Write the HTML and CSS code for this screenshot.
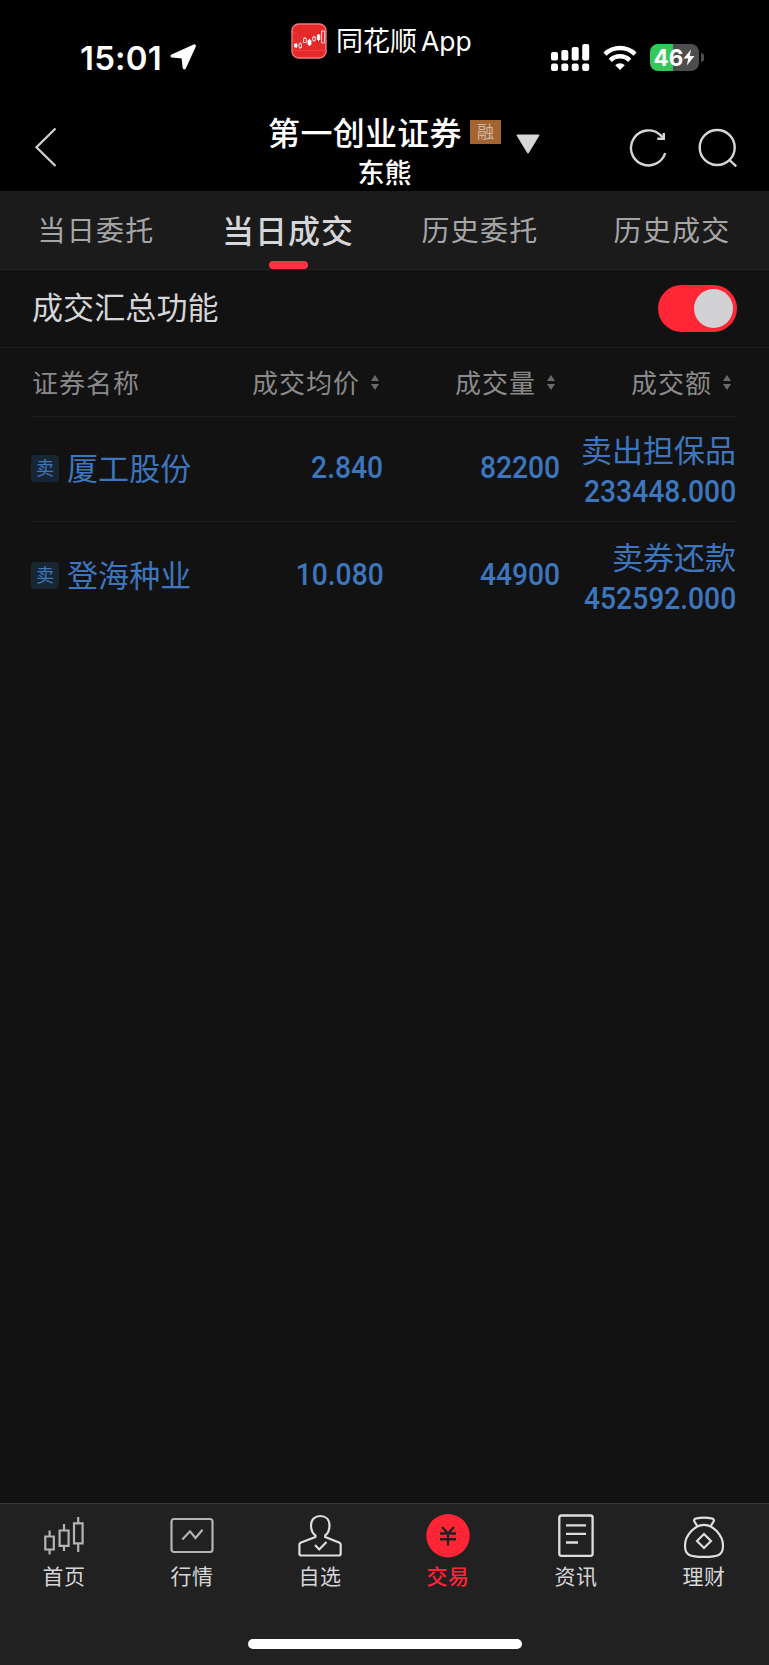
FILE: index.html
```html
<!DOCTYPE html>
<html lang="zh-CN">
<head>
    <meta charset="UTF-8">
    <meta name="viewport" content="width=device-width, initial-scale=1.0">
    <title>当日成交</title>
    <link rel="stylesheet" href="styles.css">
</head>
<body>
    <header class="top">
        <div class="status-bar">
            <div class="status-left">
                <span class="time">15:01</span>
                <svg class="location" width="26" height="26" viewBox="0 0 26 26"><path d="M24 1.2 1.9 11.2Q.6 12 1.9 12.8L12.4 13.7 13.4 23.8Q14.2 25.6 15.2 23.8L25 2.4Q25.3.7 24 1.2Z" fill="#fff" stroke="#fff" stroke-width="1.600" stroke-linejoin="round"/></svg>
            </div>
            <div class="status-app">
                <svg width="36" height="36" viewBox="0 0 36 36">
                    <rect x="1" y="1" width="34" height="34" rx="6.5" fill="#e62a2c" stroke="#f07a7a" stroke-width="1.4"/>
                    <path d="M2 27.500H34M2 10H5" stroke="#ee4a4a" stroke-width=".7"/>
                    <g fill="#fff" stroke="#fff">
                        <path d="M5.200 20v5M18.500 16v7M27.500 11v7" stroke-width="1"/>
                        <path d="M3.500 21h2.500v3H3.500zM17 17.200h3v4.500h-3zM26.300 12h2.500v4.500h-2.500z" stroke-width=".8"/>
                        <path d="M8 20.800h2.500v3.600H8zM12.500 15.500h2.800v4h-2.800zM21.700 14h2.500v3.400h-2.500zM30.600 8h3v12h-3zM9.200 19v1.500M9.200 24.500v1.500M14 14v1.500M23 12.700V14M23 17.500v1.300" fill="none" stroke-width=".8"/>
                    </g>
                </svg>
                <span class="app-name">同花顺<span class="app-latin">App</span></span>
            </div>
            <div class="status-right">
                <svg width="39" height="28" viewBox="0 0 39 28" fill="#fff">
                    <rect x="0" y="8" width="7" height="8.500" rx="2"/>
                    <rect x="10.300" y="6" width="7" height="10.500" rx="2"/>
                    <rect x="20.700" y="3" width="7" height="13.500" rx="2"/>
                    <rect x="31.200" y="0" width="7" height="16.500" rx="2"/>
                    <rect x="0" y="19.500" width="7" height="7.500" rx="2.200"/>
                    <rect x="10.300" y="19.500" width="7" height="7.500" rx="2.200"/>
                    <rect x="20.700" y="19.500" width="7" height="7.500" rx="2.200"/>
                    <rect x="31.200" y="19.500" width="7" height="7.500" rx="2.200"/>
                </svg>
                <svg class="wifi" width="34" height="26" viewBox="0 0 34 26" fill="none" stroke="#fff" stroke-width="4.500">
                    <path d="M2 9.200A21.500 21.500 0 0 1 32 9.200"/>
                    <path d="M7.300 15.300A13.800 13.800 0 0 1 26.700 15.300"/>
                    <path d="M17 25 12.200 20.300A6.800 6.800 0 0 1 21.800 20.300Z" fill="#fff" stroke="none"/>
                </svg>
                <div class="battery">
                    <span class="battery-level">46</span>
                    <svg width="12" height="17" viewBox="0 0 12 17"><path d="M8 .5.5 9.500H5.200L3.800 16.500 11.500 7H6.800Z" fill="#fff"/></svg>
                </div>
            </div>
        </div>
        <div class="title-bar">
            <svg class="back" width="24" height="40" viewBox="0 0 24 40"><path d="M21.500 1.500 2.500 20.200 21.500 39" fill="none" stroke="#d0d0d0" stroke-width="2.300"/></svg>
            <div class="title">
                <div class="broker">
                    <span class="broker-name">第一创业证券</span>
                    <span class="badge">融</span>
                    <svg class="dropdown" width="24" height="20" viewBox="0 0 24 20"><path d="M1.500 1.300H22.500L12 18.500Z" fill="#d6d6d8" stroke="#d6d6d8" stroke-width="1.800" stroke-linejoin="round"/></svg>
                </div>
                <div class="account">东熊</div>
            </div>
            <div class="actions">
                <svg width="39" height="40" viewBox="0 0 39 40" fill="none" stroke="#d6d6d8" stroke-width="2.400">
                    <path d="M36.200 25A17.500 17.500 0 1 1 31.500 7.200L35 10.600"/>
                    <path d="M34.800 5V10.700H28.300"/>
                </svg>
                <svg width="40" height="40" viewBox="0 0 40 40" fill="none" stroke="#d6d6d8" stroke-width="2.400">
                    <circle cx="19.200" cy="19.500" r="17.500"/>
                    <path d="M31.500 32 38.200 38.400"/>
                </svg>
            </div>
        </div>
    </header>

    <nav class="tabs">
        <a class="tab">当日委托</a>
        <a class="tab active">当日成交</a>
        <a class="tab">历史委托</a>
        <a class="tab">历史成交</a>
    </nav>

    <main class="content">
        <div class="summary">
            <span class="summary-label">成交汇总功能</span>
            <span class="switch"></span>
        </div>

        <div class="table">
            <div class="row head">
                <span>证券名称</span>
                <span class="num">成交均价<i class="sort"></i></span>
                <span class="num">成交量<i class="sort"></i></span>
                <span class="num">成交额<i class="sort"></i></span>
            </div>
            <div class="row">
                <div class="stock"><span class="side">卖</span><span class="name">厦工股份</span></div>
                <div class="num"><span class="digits">2.840</span></div>
                <div class="num"><span class="digits">82200</span></div>
                <div class="amount"><span>卖出担保品</span><span class="digits">233448.000</span></div>
            </div>
            <div class="row last">
                <div class="stock"><span class="side">卖</span><span class="name">登海种业</span></div>
                <div class="num"><span class="digits">10.080</span></div>
                <div class="num"><span class="digits">44900</span></div>
                <div class="amount"><span>卖券还款</span><span class="digits">452592.000</span></div>
            </div>
        </div>
    </main>

    <footer class="bottom">
        <nav class="menu">
            <a class="item">
                <svg width="44" height="44" viewBox="0 0 44 44" fill="none" stroke="#b4b4b4" stroke-width="2.200">
                    <path d="M3.300 22.500h8.500v13H3.300zM17.600 16.500h9v15.300h-9zM32 9.300h8.600v20H32zM7.600 16.500v6M7.600 35.500v5M22 10v6.500M22 32v5M36.200 3v6.300M36.200 29.500v8.500"/>
                </svg>
                <span>首页</span>
            </a>
            <a class="item">
                <svg width="44" height="44" viewBox="0 0 44 44" fill="none" stroke="#b4b4b4" stroke-width="2.200">
                    <rect x="1.500" y="5" width="41" height="33" rx="2.500"/>
                    <path d="M12.300 25.500 20 17.300 25.500 24 32.500 15.800"/>
                </svg>
                <span>行情</span>
            </a>
            <a class="item">
                <svg width="44" height="44" viewBox="0 0 44 44" fill="none" stroke="#dedede" stroke-width="2.200">
                    <path d="M17.400 23V21.500C14 19 13 16 13 11.500 13 5.500 17 2 22.300 2S31.500 5.500 31.500 11.500C31.500 16 30.500 19 27.200 21.500V23L41.600 28.800Q42.700 29.400 42.700 31V39.500Q42.700 41.500 40.700 41.500H3.400Q1.400 41.500 1.400 39.500V31Q1.400 29.400 2.500 28.800L17.400 23Z"/>
                    <path d="M17 31 21.200 35.500 28.500 28"/>
                </svg>
                <span>自选</span>
            </a>
            <a class="item active">
                <svg width="44" height="44" viewBox="0 0 44 44">
                    <circle cx="22" cy="21.700" r="21.700" fill="#ff2436"/>
                    <path d="M16 13 22 19.500 28 13M14 19.500H30M14 25.300H30M22 19.500V31.500" fill="none" stroke="#212121" stroke-width="2.400"/>
                </svg>
                <span>交易</span>
            </a>
            <a class="item">
                <svg width="44" height="44" viewBox="0 0 44 44" fill="none" stroke="#dedede" stroke-width="2.300">
                    <rect x="5.300" y="1.500" width="33.300" height="40.300" rx="2"/>
                    <path d="M12 11.300H32M12 19.900H32M12 28.500H24"/>
                </svg>
                <span>资讯</span>
            </a>
            <a class="item">
                <svg width="44" height="44" viewBox="0 0 44 44" fill="none" stroke="#dedede" stroke-width="2.200">
                    <path d="M15.500 12.300 12.300 7.300Q11.500 4.800 14.500 4.300 22 2.800 29.500 4.300 32.500 4.800 31.700 7.300L28.500 12.300"/>
                    <path d="M22 10.800C31 10.800 41 21.300 41 31.800 41 40.800 37 42.900 22 42.900S3 40.800 3 31.800C3 21.300 13 10.800 22 10.800Z"/>
                    <path d="M22 20 29 27 22 34 15 27Z"/>
                </svg>
                <span>理财</span>
            </a>
        </nav>
        <div class="home-indicator"></div>
    </footer>
</body>
</html>
```

FILE: styles.css
```css
* {
    box-sizing: border-box;
}

body {
    margin: 0;
    min-height: 1665px;
    display: flex;
    flex-direction: column;
    background-color: #121212;
    color: #d6d6d8;
    font-family: "Noto Sans CJK SC", sans-serif;
}

svg {
    display: block;
    flex: none;
}

.top {
    height: 191px;
    background-color: #000;
    color: #fff;
}

/* status bar */
.status-bar {
    display: grid;
    grid-template-columns: 291px auto 1fr;
    height: 113px;
}

.status-left {
    display: flex;
    align-items: flex-start;
    gap: 8px;
    padding: 38px 0 0 80px;
}

.time {
    font: 600 33px/40px Inter, sans-serif;
    letter-spacing: 0.2px;
}

.location {
    margin-top: 6px;
}

.status-app {
    display: flex;
    align-items: flex-start;
    gap: 9px;
    padding-top: 23px;
}

.app-name {
    font-size: 27px;
    line-height: 34px;
    white-space: nowrap;
}

.app-latin {
    margin-left: 4px;
    font-family: Inter, sans-serif;
    font-size: 26.5px;
}

.status-right {
    display: flex;
    justify-content: flex-end;
    align-items: flex-start;
    gap: 13px;
    padding: 44px 70px 0 0;
}

.wifi {
    margin-top: 1px;
}

.battery {
    position: relative;
    display: flex;
    align-items: center;
    justify-content: center;
    width: 49px;
    height: 27px;
    border-radius: 8px;
    background: linear-gradient(to right, #34c759 47%, #4d4d4f 47%);
}

.battery::after {
    content: "";
    position: absolute;
    right: -5px;
    top: 9px;
    width: 3px;
    height: 9px;
    border-radius: 0 3px 3px 0;
    background-color: #4d4d4f;
}

.battery-level {
    font: 700 22.5px/27px Inter, sans-serif;
}

/* title bar */
.title-bar {
    display: grid;
    grid-template-columns: 1fr auto 1fr;
    height: 78px;
}

.back {
    margin: 14px 0 0 34px;
}

.title {
    display: flex;
    flex-direction: column;
    align-items: center;
}

.broker {
    position: relative;
    display: flex;
    align-items: flex-start;
    gap: 8px;
    height: 40px;
}

.broker-name {
    font-size: 32px;
    font-weight: 500;
    letter-spacing: 0.3px;
    line-height: 36px;
}

.badge {
    width: 31px;
    height: 24px;
    margin-top: 7px;
    background-color: #a36432;
    color: #d0b8a4;
    font-size: 17px;
    line-height: 22px;
    text-align: center;
}

.dropdown {
    position: absolute;
    left: 248px;
    top: 21px;
}

.account {
    margin-top: 1px;
    font-size: 27px;
    font-weight: 500;
    line-height: 35px;
}

.actions {
    display: flex;
    justify-content: flex-end;
    gap: 30px;
    padding: 15px 31px 0 0;
}

/* tabs */
.tabs {
    display: grid;
    grid-template-columns: repeat(4, 1fr);
    height: 79px;
    padding-right: 1px;
    border-bottom: 1px solid #242424;
    background-color: #1b1b1b;
}

.tab {
    position: relative;
    color: #a6a6a6;
    font-size: 28px;
    letter-spacing: 1.2px;
    line-height: 76px;
    text-align: center;
}

.tab.active {
    color: #d6d6d8;
    font-size: 32px;
    font-weight: 500;
    letter-spacing: 1px;
}

.tab.active::after {
    content: "";
    position: absolute;
    left: 50%;
    bottom: 0;
    width: 39px;
    height: 8px;
    margin-left: -19px;
    border-radius: 4px;
    background-color: #ff3243;
}

/* content */
.content {
    flex: 1;
}

.summary {
    display: flex;
    align-items: center;
    justify-content: space-between;
    height: 78px;
    padding: 0 32px;
    border-bottom: 1px solid #1e1e1e;
    font-size: 31px;
}

.summary-label {
    padding-bottom: 6px;
    letter-spacing: 0.1px;
}

.switch {
    display: flex;
    justify-content: flex-end;
    width: 79px;
    height: 47px;
    padding: 4px;
    border-radius: 24px;
    background-color: #ff2636;
}

.switch::after {
    content: "";
    width: 39px;
    height: 39px;
    border-radius: 50%;
    background-color: #d2d2d5;
}

.table {
    padding: 0 33px 0 31px;
}

.row {
    display: grid;
    grid-template-columns: repeat(4, 1fr);
    align-items: center;
    height: 105px;
    border-bottom: 1px solid #1e1e1e;
    color: #3d76bd;
    font-size: 31px;
}

.row.head {
    height: 69px;
    padding: 0 0 2px 1px;
    color: #8a8a8a;
    font-size: 26px;
    letter-spacing: 1px;
}

.row.last {
    height: 109px;
    border-bottom: 0;
}

.num {
    display: flex;
    align-items: center;
    justify-content: flex-end;
    padding-bottom: 3px;
    white-space: nowrap;
}

.head .num {
    padding-bottom: 0;
}

.sort {
    display: flex;
    flex-direction: column;
    gap: 3px;
    margin: 2px 5px 0 11px;
}

.sort::before,
.sort::after {
    content: "";
    border: solid transparent;
    border-width: 0 4px 6px;
    border-bottom-color: #6a6a6a;
}

.sort::after {
    border-width: 6px 4px 0;
    border-top-color: #6a6a6a;
}

.stock {
    display: flex;
    align-items: center;
    gap: 8px;
    padding-bottom: 2px;
    white-space: nowrap;
}

.name {
    padding-bottom: 4px;
    letter-spacing: 0.1px;
}

.side {
    width: 28px;
    height: 27px;
    border-radius: 4px;
    background-color: #182533;
    font-size: 18px;
    line-height: 24px;
    text-align: center;
}

.digits {
    font-family: Roboto, sans-serif;
    font-size: 31px;
    font-weight: 500;
    line-height: 42px;
    transform: scaleX(0.91);
    transform-origin: right;
}

.amount {
    display: flex;
    flex-direction: column;
    align-items: flex-end;
    padding-top: 3px;
    line-height: 40px;
    white-space: nowrap;
}

.amount .digits {
    padding-top: 2px;
}

/* bottom menu */
.bottom {
    height: 162px;
    border-top: 1px solid #383838;
    background-color: #212121;
}

.menu {
    display: grid;
    grid-template-columns: repeat(6, 1fr);
    height: 135px;
    padding: 10px 1px 0 0;
}

.item {
    display: flex;
    flex-direction: column;
    align-items: center;
    color: #d6d6d8;
    font-size: 21px;
    letter-spacing: 0.5px;
    line-height: 35px;
}

.item.active {
    color: #ff2436;
    font-weight: 500;
}

.home-indicator {
    width: 274px;
    height: 10px;
    margin: 0 auto;
    border-radius: 5px;
    background-color: #fff;
}
```
